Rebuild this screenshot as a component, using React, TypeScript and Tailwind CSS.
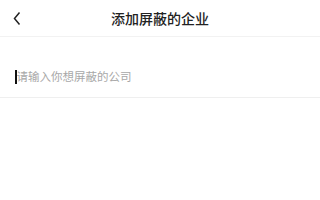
import React from "react";

const font = { fontFamily: '"Noto Sans CJK SC", "Noto Sans", sans-serif' };

export default function App() {
  return (
    <div className="w-[320px] h-[200px] bg-white" style={font}>
      <div className="relative flex h-[37px] items-center justify-center border-b border-[#f2f2f2]">
        <button className="absolute left-[12px] top-[11px]">
          <svg width="10" height="15" viewBox="0 0 10 15" fill="none">
            <path d="M7.5 1.5 L2.5 7.5 L7.5 13.5" stroke="#222" strokeWidth="1.5" />
          </svg>
        </button>
        <h1 className="text-[14px] font-medium text-[#222] leading-none">添加屏蔽的企业</h1>
      </div>
      <div className="flex h-[61px] items-center border-b border-[#efefef] pl-[15px] pt-[20px]">
        <span className="h-[14px] w-[1.5px] bg-[#111]" />
        <input
          className="flex-1 bg-transparent text-[11.5px] text-[#333] outline-none placeholder:text-[#a8a8a8]"
          placeholder="请输入你想屏蔽的公司"
        />
      </div>
    </div>
  );
}
